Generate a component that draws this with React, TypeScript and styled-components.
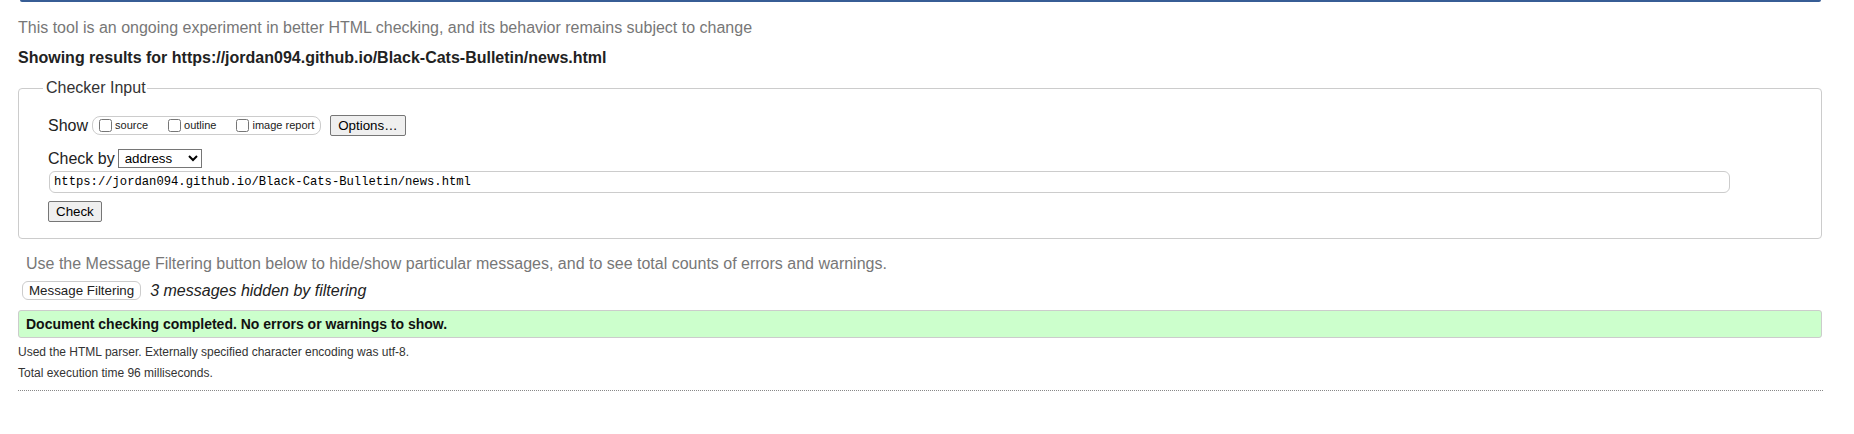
import styled, { createGlobalStyle } from 'styled-components';

const GlobalStyle = createGlobalStyle`
  html, body {
    margin: 0;
    padding: 0;
    background: #ffffff;
  }
  body {
    font-family: "Liberation Sans", Arial, sans-serif;
    color: #222222;
  }
`;

const Page = styled.div`
  display: flex;
  flex-direction: column;
  width: 1804px;
  padding: 0 32px 0 18px;
`;

const HeaderEdge = styled.div`
  height: 2px;
  margin: 0 1px 0 2px;
  background-color: #375d95;
  border-radius: 0 0 3px 3px;
`;

const Intro = styled.p`
  margin: 17px 0 0;
  font-size: 16px;
  line-height: 18px;
  color: #777777;
`;

const ResultsFor = styled.p`
  margin: 12px 0 0;
  font-size: 16px;
  line-height: 18px;
  font-weight: bold;
  color: #222222;
`;

const CheckerFieldset = styled.fieldset`
  margin: 12px 0 0;
  padding: 18px 20px 16px 29px;
  border: 1px solid #cccccc;
  border-radius: 4px;
  min-width: 0;
`;

const Legend = styled.legend`
  margin-left: -5px;
  padding: 0 1px 0 3px;
  font-size: 16px;
  line-height: 18px;
  color: #333333;
`;

const FormRow = styled.div<{ $top?: number }>`
  display: flex;
  align-items: center;
  height: 21px;
  margin-top: ${(p) => p.$top ?? 0}px;
  font-size: 16px;
  line-height: 18px;
  color: #222222;
`;

const OptionGroup = styled.span`
  display: flex;
  align-items: center;
  box-sizing: border-box;
  height: 19px;
  margin-left: 4px;
  padding: 0 6px 0 0;
  border: 1px solid #cccccc;
  border-radius: 8px;
`;

const OptionLabel = styled.label<{ $last?: boolean }>`
  display: flex;
  align-items: center;
  margin-right: ${(p) => (p.$last ? 0 : 14)}px;
  font-size: 11px;
  line-height: 13px;
  color: #222222;
`;

const Box = styled.input`
  width: 13px;
  height: 13px;
  margin: 0 3px 0 6px;
`;

const GreyButton = styled.button<{ $left?: number }>`
  box-sizing: border-box;
  height: 21px;
  margin-left: ${(p) => p.$left ?? 0}px;
  padding: 0 7px;
  font-family: "Liberation Sans", Arial, sans-serif;
  font-size: 13.33px;
  color: #000000;
  background-color: #efefef;
  border: 1px solid #767676;
  border-radius: 2px;
`;

const ByLabel = styled.span``;

const MethodSelect = styled.select`
  box-sizing: border-box;
  width: 84px;
  height: 19px;
  margin-left: 3px;
  padding: 0 0 0 2px;
  font-family: "Liberation Sans", Arial, sans-serif;
  font-size: 13.33px;
  color: #000000;
  background-color: #ffffff;
  border: 1px solid #767676;
  border-radius: 0;
`;

const UrlInput = styled.input`
  display: block;
  box-sizing: border-box;
  width: 1681px;
  height: 22px;
  margin: 2px 0 0 1px;
  padding: 0 4px;
  font-family: "Liberation Mono", "DejaVu Sans Mono", monospace;
  font-size: 12.2px;
  color: #000000;
  border: 1px solid #cccccc;
  border-radius: 6px;
  outline: none;
`;

const ButtonRow = styled.div`
  margin-top: 8px;
`;

const Note = styled.p`
  margin: 16px 0 0;
  padding-left: 8px;
  font-size: 16px;
  line-height: 18px;
  color: #777777;
`;

const FilterRow = styled.div`
  display: flex;
  align-items: center;
  height: 19px;
  margin-top: 8px;
  padding-left: 4px;
`;

const FilterButton = styled.button`
  box-sizing: border-box;
  height: 19px;
  padding: 0 6px;
  font-family: "Liberation Sans", Arial, sans-serif;
  font-size: 13.33px;
  color: #222222;
  background-color: #ffffff;
  border: 1px solid #cccccc;
  border-radius: 6px;
`;

const HiddenCount = styled.span`
  margin-left: 9px;
  font-size: 16px;
  line-height: 18px;
  font-style: italic;
  color: #222222;
`;

const SuccessBox = styled.div`
  display: flex;
  align-items: center;
  box-sizing: border-box;
  height: 28px;
  margin-top: 10px;
  padding-left: 7px;
  font-size: 14px;
  font-weight: bold;
  color: #111111;
  background-color: #ccffcc;
  border: 1px solid #cccccc;
  border-radius: 3px;
`;

const Stat = styled.p<{ $top: number }>`
  margin: ${(p) => p.$top}px 0 0;
  font-size: 12px;
  line-height: 14px;
  color: #333333;
`;

const DottedRule = styled.hr`
  width: 1805px;
  margin: 10px 0 0;
  border: none;
  border-top: 1px dotted #888888;
  height: 0;
`;

function App() {
  return (
    <Page>
      <GlobalStyle />
      <HeaderEdge />
      <Intro>
        This tool is an ongoing experiment in better HTML checking, and its
        behavior remains subject to change
      </Intro>
      <ResultsFor>
        Showing results for https://jordan094.github.io/Black-Cats-Bulletin/news.html
      </ResultsFor>
      <CheckerFieldset>
        <Legend>Checker Input</Legend>
        <FormRow>
          <ByLabel>Show</ByLabel>
          <OptionGroup>
            <OptionLabel>
              <Box type="checkbox" />
              source
            </OptionLabel>
            <OptionLabel>
              <Box type="checkbox" />
              outline
            </OptionLabel>
            <OptionLabel $last>
              <Box type="checkbox" />
              image report
            </OptionLabel>
          </OptionGroup>
          <GreyButton $left={9}>Options…</GreyButton>
        </FormRow>
        <FormRow $top={12}>
          <ByLabel>Check by</ByLabel>
          <MethodSelect defaultValue="address">
            <option value="address">address</option>
            <option value="file">file upload</option>
            <option value="text">text input</option>
          </MethodSelect>
        </FormRow>
        <UrlInput
          type="url"
          defaultValue="https://jordan094.github.io/Black-Cats-Bulletin/news.html"
        />
        <ButtonRow>
          <GreyButton>Check</GreyButton>
        </ButtonRow>
      </CheckerFieldset>
      <Note>
        Use the Message Filtering button below to hide/show particular
        messages, and to see total counts of errors and warnings.
      </Note>
      <FilterRow>
        <FilterButton>Message Filtering</FilterButton>
        <HiddenCount>3 messages hidden by filtering</HiddenCount>
      </FilterRow>
      <SuccessBox>
        Document checking completed. No errors or warnings to show.
      </SuccessBox>
      <Stat $top={7}>
        Used the HTML parser. Externally specified character encoding was
        utf-8.
      </Stat>
      <Stat $top={7}>Total execution time 96 milliseconds.</Stat>
      <DottedRule />
    </Page>
  );
}

export default App;
